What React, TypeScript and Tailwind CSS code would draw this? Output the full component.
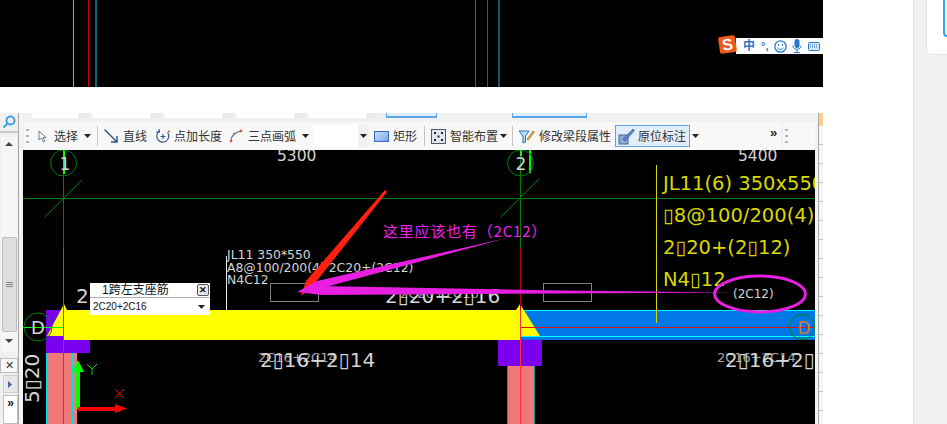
import React from 'react';

const UI_FONT = "font-['Liberation_Sans','Noto_Sans_CJK_SC',sans-serif]";

const Caret = () => (
  <svg width="7" height="4" viewBox="0 0 7 4" className="shrink-0">
    <path d="M0 0h7L3.5 4z" fill="#222" />
  </svg>
);

const Sep = () => <div className="h-[20px] w-px shrink-0 bg-[#c4c4c4]" />;

const Grip = () => (
  <div className="flex h-[14px] w-[3px] shrink-0 flex-col justify-between">
    <div className="h-[2px] bg-[#b8b8b8]" />
    <div className="h-[2px] bg-[#b8b8b8]" />
    <div className="h-[2px] bg-[#b8b8b8]" />
  </div>
);

const ToolLabel: React.FC<{ children: React.ReactNode }> = ({ children }) => (
  <span className="shrink-0 text-[12px] leading-none text-[#333]">{children}</span>
);

const DIM = { fill: '#d4d4d4', fontFamily: "'DejaVu Sans', sans-serif" };

const Canvas = () => (
  <svg viewBox="23 150 792 274" width="792" height="274" className="block bg-black">
    {/* axis grid */}
    <line x1="23" y1="198.5" x2="815" y2="198.5" stroke="#008000" />
    <line x1="63.5" y1="150" x2="63.5" y2="248" stroke="#008000" />
    <line x1="520.5" y1="150" x2="520.5" y2="248" stroke="#008000" />
    <line x1="45" y1="217" x2="82" y2="180" stroke="#008000" />
    <line x1="501" y1="217" x2="539" y2="179" stroke="#008000" />
    <rect x="63" y="150" width="2" height="24" fill="#00ff00" />
    <rect x="520" y="150" width="2" height="6" fill="#00ff00" />
    <rect x="529" y="150" width="2" height="23" fill="#00ff00" />
    <circle cx="63.5" cy="163" r="13" fill="none" stroke="#008000" />
    <circle cx="520.5" cy="163" r="13" fill="none" stroke="#008000" />
    <text x="65" y="170" fontSize="17" textAnchor="middle" {...DIM}>1</text>
    <text x="521" y="170" fontSize="17" textAnchor="middle" {...DIM}>2</text>
    <text x="277" y="161" fontSize="15.5" {...DIM}>5300</text>
    <text x="738" y="161" fontSize="15.5" {...DIM}>5400</text>

    {/* columns */}
    <rect x="46" y="353" width="31" height="71" fill="#f07878" />
    <line x1="46.5" y1="353" x2="46.5" y2="424" stroke="#00e0e0" />
    <line x1="72.5" y1="353" x2="72.5" y2="424" stroke="#00e0e0" />
    <rect x="507" y="366" width="28" height="58" fill="#f07878" />
    <line x1="507.5" y1="366" x2="507.5" y2="424" stroke="#109090" />
    <line x1="534.5" y1="366" x2="534.5" y2="424" stroke="#109090" />
    <rect x="46" y="310" width="18" height="30" fill="#7b00f0" />
    <rect x="46" y="340" width="44" height="13" fill="#7b00f0" />
    <rect x="498" y="340" width="44" height="26" fill="#7b00f0" />

    {/* beams */}
    <rect x="520" y="310" width="295" height="30" fill="#0078e8" />
    <line x1="520" y1="310.5" x2="815" y2="310.5" stroke="#00ffff" />
    <line x1="520" y1="336.5" x2="815" y2="336.5" stroke="#00ffff" />
    <rect x="64" y="310" width="456" height="30" fill="#ffff00" />
    <polygon points="64,304 47,336 64,336" fill="#ffff00" />
    <polygon points="64,304 67,310 64,310" fill="#ffff00" />
    <polygon points="520,304 516,310 520,310" fill="#ffff00" />
    <polygon points="520,304 540,336 520,336" fill="#ffff00" />
    <line x1="63.5" y1="248" x2="63.5" y2="424" stroke="#ff2020" />
    <line x1="520.5" y1="248" x2="520.5" y2="310" stroke="#b00000" />
    <line x1="520.5" y1="310" x2="520.5" y2="424" stroke="#ff3030" />
    <line x1="521" y1="327.5" x2="815" y2="327.5" stroke="#e01010" />
    <line x1="23" y1="327.5" x2="63" y2="327.5" stroke="#00ff00" />
    <circle cx="38" cy="327" r="14" fill="none" stroke="#008000" />
    <circle cx="802" cy="327" r="12.5" fill="none" stroke="#008000" />
    <text x="38" y="334" fontSize="18" textAnchor="middle" {...DIM}>D</text>
    <text x="804" y="334" fontSize="17" textAnchor="middle" fontFamily="'DejaVu Sans', sans-serif" fill="#d07a30">D</text>

    {/* beam notes */}
    <line x1="226.5" y1="256" x2="226.5" y2="310" stroke="#e8e8e8" />
    <text x="227" y="259" fontSize="12.4" {...DIM}>JL11 350*550</text>
    <text x="227" y="272" fontSize="12.4" {...DIM}>A8@100/200(4) 2C20+(2C12)</text>
    <text x="227" y="284" fontSize="12.4" {...DIM}>N4C12</text>
    <rect x="270.5" y="283.5" width="48" height="18" fill="none" stroke="#808080" />
    <rect x="543.5" y="283.5" width="48" height="18" fill="none" stroke="#808080" />

    <text x="76" y="303" fontSize="20" {...DIM}>2</text>
    <text x="400" y="298" fontSize="13" fill="#a8a8a8" fontFamily="'DejaVu Sans', sans-serif">2C20+2C16</text>
    <text x="385" y="303" fontSize="20" {...DIM}>2▯20+2▯16</text>
    <text x="258" y="362" fontSize="13" fill="#a8a8a8" fontFamily="'DejaVu Sans', sans-serif">2C16+2C14</text>
    <text x="260" y="367" fontSize="20" {...DIM}>2▯16+2▯14</text>
    <text x="717" y="362" fontSize="13" fill="#a8a8a8" fontFamily="'DejaVu Sans', sans-serif">2C16+2C14</text>
    <text x="725" y="367" fontSize="20" {...DIM}>2▯16+2▯</text>
    <text x="39" y="403" fontSize="20" transform="rotate(-90 39 403)" {...DIM}>5▯20</text>

    {/* span label */}
    <line x1="656.5" y1="165" x2="656.5" y2="323" stroke="#d8d800" />
    <g fill="#d8d800" fontFamily="'DejaVu Sans', sans-serif" fontSize="19.5">
      <text x="663" y="190">JL11(6) 350x550</text>
      <text x="663" y="222">▯8@100/200(4)</text>
      <text x="663" y="254">2▯20+(2▯12)</text>
      <text x="663" y="286">N4▯12</text>
    </g>

    {/* markup on top of the drawing */}
    <polygon points="385,190 387,192 312,287 301,296 306,281" fill="#ff2010" />
    <polygon points="507,238 322,288 297,292 317,281" fill="#e81fe0" />
    <polygon points="735,292.500 560,293.500 322,295 297,292 320,286 560,290.500" fill="#e81fe0" />
    <ellipse cx="760" cy="294" rx="45.5" ry="18" fill="none" stroke="#e81fe0" strokeWidth="3" />
    <text x="733" y="298" fontSize="12" {...DIM}>(2C12)</text>
    <text x="383" y="237" fontSize="15" letterSpacing="0.8" fill="#f020f0" fontFamily="'Noto Sans CJK SC', sans-serif">这里应该也有（2C12）</text>

    {/* ucs */}
    <rect x="76" y="368" width="4" height="41" fill="#00ff00" />
    <polygon points="78,360 72,372 84,372" fill="#00ff00" />
    <rect x="78" y="407" width="38" height="4" fill="#ff0000" />
    <polygon points="127,408.500 115,404 115,413" fill="#ff0000" />
    <path d="M87 364l5 5 5-5M92 369v6" fill="none" stroke="#00d000" />
    <path d="M115 389l9 9M124 389l-9 9" fill="none" stroke="#e00000" />
  </svg>
);

export default function App() {
  return (
    <div className={`flex h-[424px] w-[947px] overflow-hidden bg-white ${UI_FONT}`}>
      <div className="w-[914px] shrink-0 border-r border-[#e2e3e6]">
        {/* black drawing sheet above */}
        <div className="relative h-[87px] w-[823px] bg-black">
          <div className="absolute left-[73px] top-0 h-full w-px bg-[#00e8e8]" />
          <div className="absolute left-[88px] top-0 h-full w-px bg-[#d00000]" />
          <div className="absolute left-[95px] top-0 h-full w-[2px] bg-[#0a6a6a]" />
          <div className="absolute left-[475px] top-0 h-full w-px bg-[#0a7a7a]" />
          <div className="absolute left-[487px] top-0 h-full w-px bg-[#e01010]" />
          <div className="absolute left-[498px] top-0 h-full w-[2px] bg-[#0a5a5a]" />
          {/* sogou ime bar */}
          <div className="absolute left-[736px] top-[38px] flex h-[16px] w-[87px] items-center bg-white pl-[7px] text-[#2a78c8]">
            <span className="text-[12px] font-bold leading-none">中</span>
            <span className="ml-[6px] w-[8px] text-[11px] font-bold leading-none">°,</span>
            <svg width="13" height="13" viewBox="0 0 13 13" fill="none" stroke="#2a78c8" className="ml-[5px]">
              <circle cx="6.500" cy="6.500" r="5.700" strokeWidth="1.300" />
              <path d="M4.500 4v2M8.500 4v2M3.500 8c1 1.800 5 1.800 6 0" />
            </svg>
            <svg width="10" height="14" viewBox="0 0 10 14" fill="#2a78c8" className="ml-[5px]">
              <rect x="2.500" y="0" width="5" height="9" rx="2.500" />
              <path d="M0.800 6.500c0 5 8.400 5 8.400 0M5 10.500v3M2 13.500h6" fill="none" stroke="#2a78c8" />
            </svg>
            <svg width="12" height="9" viewBox="0 0 12 9" fill="#d8e8f8" stroke="#2a78c8" className="ml-[6px]">
              <rect x="0.500" y="0.500" width="11" height="8" rx="1" />
              <path d="M2 3h8M2 5h8" strokeDasharray="1 1" fill="none" />
            </svg>
          </div>
          <div className="absolute left-[719px] top-[36px] flex h-[17px] w-[17px] -rotate-[8deg] items-center justify-center rounded-[2px] bg-[#ee5a1e] text-[16px] font-bold leading-none text-white">
            S
          </div>
        </div>

        <div className="h-[26px]" />

        {/* cad window */}
        <div className="flex h-[311px] w-[823px]">
          {/* left rail */}
          <div className="flex w-[23px] shrink-0 bg-[#f3f3f3]">
            <div className="flex w-[19px] flex-col border-r border-[#a8a8a8] bg-[#f0f0f0]">
              <div className="flex h-[20px] items-center justify-center border-b-2 border-[#c8c8c8]">
                <svg width="14" height="14" viewBox="0 0 14 14" fill="none" stroke="#3fa0e8" strokeWidth="2">
                  <circle cx="8.500" cy="5.500" r="4" />
                  <path d="M5.500 8.500L1.500 12.500" />
                </svg>
              </div>
              <div className="mx-[1px] mt-[4px] flex h-[216px] flex-col items-center bg-[#f6f6f6]">
                <svg width="8" height="4" viewBox="0 0 8 4" className="mt-[5px]">
                  <path d="M4 0l4 4H0z" fill="#444" />
                </svg>
                <div className="mt-[91px] flex h-[95px] w-[15px] flex-col items-center justify-center gap-[1px] rounded-[2px] border border-[#bcbcbc] bg-[#dedede]">
                  <div className="h-px w-[7px] bg-[#888]" />
                  <div className="h-px w-[7px] bg-[#888]" />
                  <div className="h-px w-[7px] bg-[#888]" />
                </div>
                <svg width="8" height="4" viewBox="0 0 8 4" className="mt-[7px]">
                  <path d="M0 0h8L4 4z" fill="#444" />
                </svg>
              </div>
              <div className="mt-[6px] flex h-[15px] items-center justify-center border border-[#bdbdbd] bg-[#f8f8f8] text-[11px] leading-none text-[#333]">
                ✕
              </div>
              <div className="ml-[3px] mt-[2px] flex h-[18px] items-center justify-end border border-[#cfcfcf] bg-[#e8e8e8] pr-[5px]">
                <svg width="4" height="7" viewBox="0 0 4 7">
                  <path d="M0 0l4 3.500L0 7z" fill="#4a62b0" />
                </svg>
              </div>
              <div className="ml-[3px] mt-[2px] flex h-[29px] items-start justify-center border border-[#bdbdbd] bg-white pt-[1px] text-[12px] font-bold leading-none text-[#222]">
                »
              </div>
            </div>
          </div>

          {/* tool area */}
          <div className="flex w-[792px] shrink-0 flex-col">
            {/* bottom edge of the toolbar row hidden above */}
            <div className="flex h-[9px] items-start bg-[#f0f0f0]">
              <div className="ml-[9px] flex h-[5px] gap-[2px]">
                <div className="flex h-full w-[58px] bg-white">
                  <div className="ml-[46px] h-full w-[12px] bg-[#ececec]" />
                </div>
                {[0, 1, 2, 3].map((i) => (
                  <div key={i} className="flex h-full w-[70px] bg-white">
                    <div className="ml-[58px] h-full w-[12px] bg-[#ececec]" />
                  </div>
                ))}
              </div>
              <div className="ml-[8px] h-[5px] w-[51px] border-x border-b-2 border-[#58a6ee] bg-[#e2eefa]" />
              <div className="ml-[75px] h-[5px] w-[75px] border-x border-b-2 border-[#58a6ee] bg-[#e2eefa]" />
            </div>
            <div className="flex h-[28px] bg-[#f0f0f0]">
              <div className="ml-[1px] flex h-full w-[757px] items-center rounded-[3px] bg-[#f8f8f8]">
                <div className="ml-[2px]"><Grip /></div>
                <svg width="9" height="13" viewBox="0 0 9 13" className="ml-[9px] shrink-0" fill="#fff" stroke="#6a7a90">
                  <path d="M1 1v9l2.500-2 2 4 1.500-1-2-3.500H8z" />
                </svg>
                <div className="ml-[7px]"><ToolLabel>选择</ToolLabel></div>
                <div className="ml-[6px]"><Caret /></div>
                <div className="ml-[6px]"><Sep /></div>
                <svg width="14" height="14" viewBox="0 0 14 14" className="ml-[6px] shrink-0" fill="none" stroke="#26527a" strokeWidth="1.400">
                  <path d="M0.500 0.500L13 13M13 7v6H7" />
                </svg>
                <div className="ml-[5px]"><ToolLabel>直线</ToolLabel></div>
                <svg width="16" height="16" viewBox="0 0 16 16" className="ml-[8px] shrink-0" fill="none" stroke="#34588a" strokeWidth="1.200">
                  <path d="M12.500 4.500A6 6 0 1 1 4 3.500" />
                  <path d="M4 1l.5 3H1M8 6v5M5.500 8.500h5" />
                  <circle cx="14" cy="3.500" r="1" fill="#d05040" stroke="none" />
                </svg>
                <div className="ml-[3px]"><ToolLabel>点加长度</ToolLabel></div>
                <svg width="14" height="14" viewBox="0 0 14 14" className="ml-[7px] shrink-0" fill="none" stroke="#4a78a8" strokeWidth="1.200">
                  <path d="M2 12C2 7 6 3 12 2" />
                  <circle cx="2" cy="12" r="1.400" fill="#d06040" stroke="none" />
                  <circle cx="5" cy="5" r="1.200" fill="#d06040" stroke="none" />
                  <circle cx="12" cy="2" r="1.400" fill="#d06040" stroke="none" />
                </svg>
                <div className="ml-[5px]"><ToolLabel>三点画弧</ToolLabel></div>
                <div className="ml-[6px]"><Caret /></div>
                <div className="ml-[4px] flex h-[22px] w-[56px] shrink-0 items-center bg-white">
                  <div className="ml-[45px] flex h-full w-[11px] items-center justify-center bg-[#f1f1f1]"><Caret /></div>
                </div>
                <div className="ml-[5px] h-[11px] w-[15px] shrink-0 border border-[#3a68c0] bg-gradient-to-br from-[#cfe0fa] to-[#7ea4e8]" />
                <div className="ml-[4px]"><ToolLabel>矩形</ToolLabel></div>
                <div className="ml-[7px]"><Sep /></div>
                <svg width="15" height="15" viewBox="0 0 15 15" className="ml-[6px] shrink-0">
                  <rect x="0.500" y="0.500" width="14" height="14" fill="#dfe6ee" stroke="#4a5a6a" />
                  <path d="M3 3h2v2H3zM10 3h2v2h-2zM6.500 6.500h2v2h-2zM3 10h2v2H3zM10 10h2v2h-2z" fill="#222" />
                </svg>
                <div className="ml-[4px]"><ToolLabel>智能布置</ToolLabel></div>
                <div className="ml-[2px]"><Caret /></div>
                <div className="ml-[5px]"><Sep /></div>
                <svg width="17" height="15" viewBox="0 0 17 15" className="ml-[5px] shrink-0" fill="none">
                  <path d="M1 2h10L7.500 7v6L5 14V7z" fill="#bcdcf4" stroke="#2a70b0" />
                  <path d="M9 10l6-8 1.500 1-6 8z" fill="#e8b040" stroke="#806020" strokeWidth="0.600" />
                </svg>
                <div className="ml-[4px]"><ToolLabel>修改梁段属性</ToolLabel></div>
                <div className="ml-[4px] flex h-[22px] w-[75px] shrink-0 items-center border border-[#5aa6f0] bg-[#e2eefb] pl-[2px]">
                  <svg width="17" height="17" viewBox="0 0 17 17" fill="none" className="shrink-0">
                    <rect x="1" y="7" width="9" height="9" fill="#8aa8d0" stroke="#4a6a9a" />
                    <path d="M5 11L15 1l1.500 1.500L7 13z" fill="#5a88c8" stroke="#2a4a80" strokeWidth="0.600" />
                  </svg>
                  <div className="ml-[3px]"><ToolLabel>原位标注</ToolLabel></div>
                </div>
                <div className="ml-[2px]"><Caret /></div>
                <span className="-mt-[8px] ml-[71px] text-[13px] font-bold leading-none text-[#222]">»</span>
              </div>
              <div className="ml-[2px] flex h-full flex-1 items-center rounded-[3px] bg-[#f8f8f8] pl-[2px]">
                <Grip />
              </div>
            </div>
            <div className="relative">
              <Canvas />
              {/* in-place edit popup */}
              <div className="absolute left-[67px] top-[133px] w-[120px] bg-white">
                <div className="flex h-[15px] items-center justify-between border-b border-[#b0b0b0] pl-[12px] pr-[1px]">
                  <span className="text-[12px] leading-none text-[#111]">1跨左支座筋</span>
                  <div className="flex h-[12px] w-[12px] items-center justify-center rounded-[2px] border border-[#555] bg-[#e4e8ee] text-[9px] font-bold leading-none text-[#111]">
                    ✕
                  </div>
                </div>
                <div className="flex h-[17px] items-center justify-between pl-[3px] pr-[5px]">
                  <span className="text-[10px] leading-none text-[#111]">2C20+2C16</span>
                  <Caret />
                </div>
              </div>
            </div>
          </div>

          {/* right rail */}
          <div className="flex w-[8px] shrink-0">
            <div className="w-[4px] border-r border-[#a8a8a8] bg-[#f3f3f3]" />
            <div className="flex w-[4px] flex-col bg-[#f6f6f6]">
              <div className="h-[13px] bg-[#fdd08a]" />
              {[0, 1, 2, 3, 4, 5, 6, 7, 8, 9, 10, 11, 12, 13, 14].map((i) => (
                <div key={i} className="mt-[18px] h-px bg-[#c4c4c4]" />
              ))}
            </div>
          </div>
        </div>
      </div>

      {/* page gutter and side card */}
      <div className="flex-1 bg-[#f0f1f3] pl-[12px]">
        <div className="h-[55px] rounded-bl-[4px] border-b border-l border-[#e4e5e8] bg-white pl-[16px]">
          <div className="h-[37px] w-[4px] rounded-bl-[4px] border-b-2 border-l-2 border-[#2aa8f0]" />
        </div>
      </div>
    </div>
  );
}
